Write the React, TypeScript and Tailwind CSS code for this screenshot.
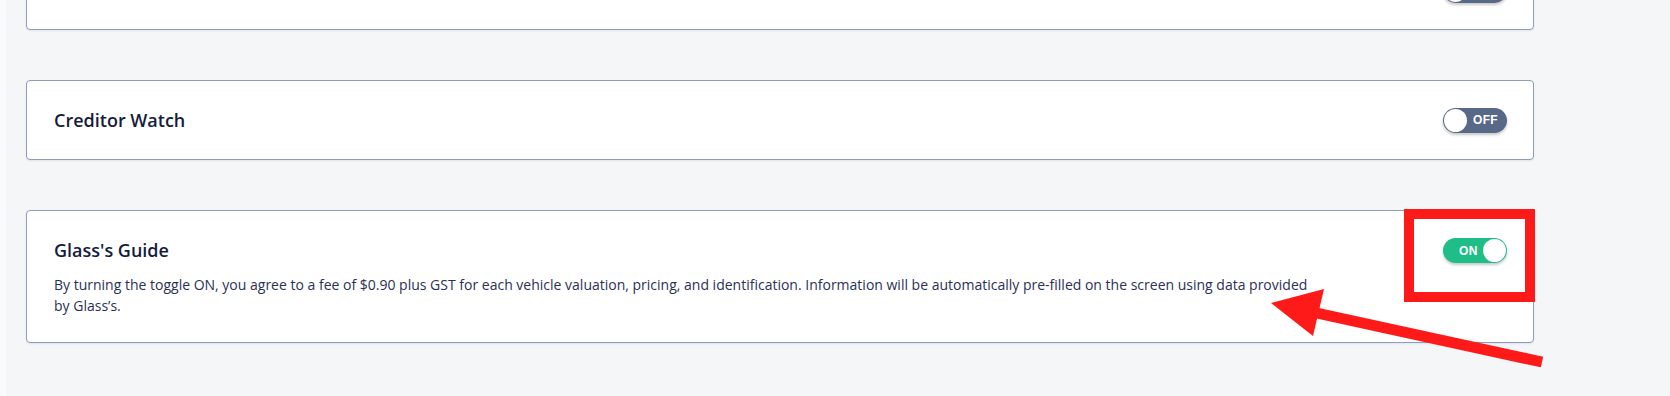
import React from "react";

function Toggle({ on, label = true }: { on: boolean; label?: boolean }) {
  if (on) {
    return (
      <div className="flex h-[25px] w-[64px] shrink-0 items-center justify-between rounded-full bg-[#1fbd87] pl-[16px] pr-[1px] shadow-[0_2px_3px_rgba(0,0,0,0.22)]">
        <span className="text-[12px] font-bold leading-none tracking-[0.3px] text-white" style={{ fontFamily: '"Liberation Sans", Arial, sans-serif' }}>
          ON
        </span>
        <span className="h-[23px] w-[23px] rounded-full bg-white" />
      </div>
    );
  }
  return (
    <div className="flex h-[25px] w-[64px] shrink-0 items-center rounded-full bg-[#586887] pl-[1px] shadow-[0_2px_3px_rgba(0,0,0,0.22)]">
      <span className="h-[23px] w-[23px] rounded-full bg-white" />
      {label && (
        <span className="ml-[6px] text-[12px] font-bold leading-none tracking-[0.3px] text-white" style={{ fontFamily: '"Liberation Sans", Arial, sans-serif' }}>
          OFF
        </span>
      )}
    </div>
  );
}

export default function App() {
  return (
    <div
      className="relative flex h-[396px] w-[1670px] overflow-hidden bg-[#f5f6f8]"
      style={{ fontFamily: '"Open Sans", "Noto Sans", sans-serif' }}
    >
      <div className="h-full w-[6px] shrink-0 bg-[#fbfbfc]" />
      <div className="ml-[20px] mt-[-50px] flex w-[1508px] flex-col gap-[50px]">
        <div className="flex h-[80px] items-center justify-end rounded-[4px] border border-[#8c9dc2] bg-white pl-[27px] pr-[26px] shadow-[0_1px_2px_rgba(0,0,0,0.08)]">
          <Toggle on={false} label={false} />
        </div>
        <div className="flex h-[80px] items-center justify-between rounded-[4px] border border-[#8c9dc2] bg-white pl-[27px] pr-[26px] shadow-[0_1px_2px_rgba(0,0,0,0.08)]">
          <span className="text-[18px] font-semibold leading-[24px] text-[#161c3c]">Creditor Watch</span>
          <Toggle on={false} />
        </div>
        <div className="flex items-start justify-between rounded-[4px] border border-[#8c9dc2] bg-white pb-[26px] pl-[27px] pr-[26px] pt-[27px] shadow-[0_1px_2px_rgba(0,0,0,0.08)]">
          <div className="flex flex-col">
            <span className="text-[18px] font-semibold leading-[24px] text-[#161c3c]">Glass's Guide</span>
            <p className="mt-[12px] max-w-[1262px] text-[14px] leading-[21px] text-[#2a3156]">
              By turning the toggle ON, you agree to a fee of $0.90 plus GST for each vehicle valuation, pricing, and identification. Information will be automatically pre-filled on the screen using data provided by Glass’s.
            </p>
          </div>
          <Toggle on={true} />
        </div>
      </div>

      <div className="pointer-events-none absolute left-[1404px] top-[209px] h-[93px] w-[131px] border-[10px] border-[#ff1a1a]" />
      <svg className="pointer-events-none absolute left-0 top-0" width="1670" height="396" viewBox="0 0 1670 396">
        <line x1="1542" y1="362" x2="1312" y2="312" stroke="#ff1a1a" strokeWidth="11" />
        <polygon points="1271,303 1324,289 1313,336" fill="#ff1a1a" />
      </svg>
    </div>
  );
}
